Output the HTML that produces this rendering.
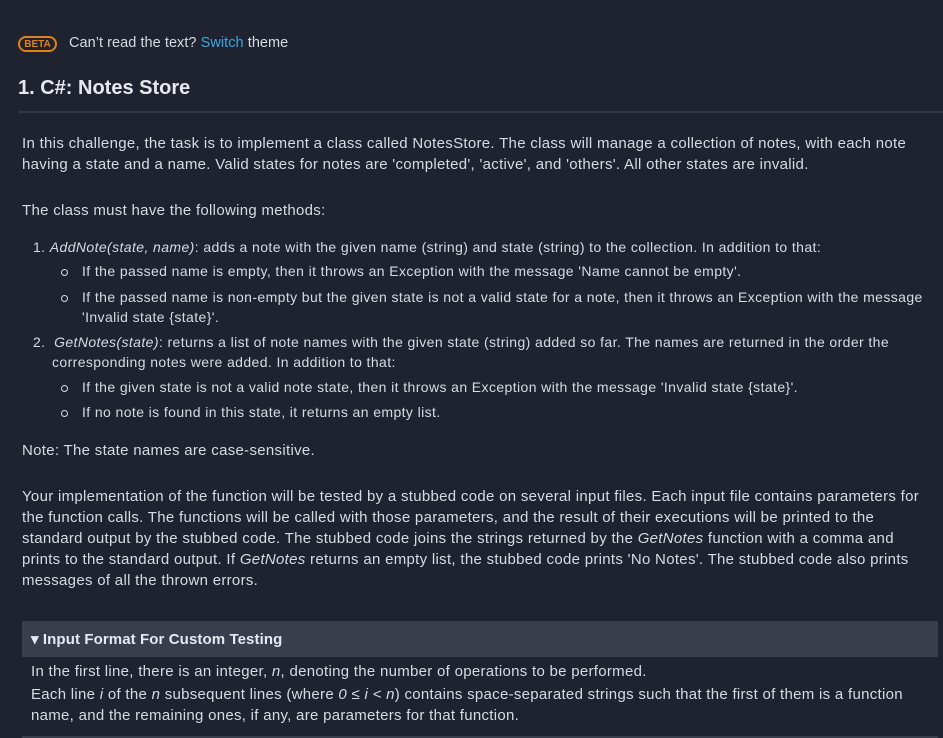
<!DOCTYPE html>
<html><head><meta charset="utf-8"><style>
body{margin:0;background:#1f2330;color:#d6dbe3;font-family:"Liberation Sans",sans-serif;width:943px;height:738px;overflow:hidden;position:relative}
.a{position:absolute;white-space:nowrap;font-size:15px;letter-spacing:0.3px}
.l{font-size:14px;letter-spacing:0.4px}
.b{font-size:15px;letter-spacing:0.29px}
.beta{position:absolute;left:18px;top:36px;width:39px;height:16px;border:2px solid #e0801a;border-radius:10px;box-sizing:border-box;color:#e0801a;font-size:10px;font-weight:bold;text-align:center;line-height:13px}
h1{position:absolute;left:18px;top:77px;margin:0;font-size:20px;font-weight:bold;color:#e6eaf0}
.hr{position:absolute;left:18px;right:0;top:111px;height:2px;background:#323745}
.dot{position:absolute;width:5px;height:5px;border:1.3px solid #d6dbe3;border-radius:50%}
.box{position:absolute;left:22px;width:916px;top:621px;height:36px;background:#393e4c}
</style></head><body>
<div class="beta">BETA</div>
<div class="a" style="left:69px;top:35px;font-size:14.5px;letter-spacing:0.05px">Can’t read the text? <span style="color:#3ea6e0">Switch</span> theme</div>
<h1>1. C#: Notes Store</h1>
<div class="hr"></div>
<div class="a" style="left:22px;top:135px">In this challenge, the task is to implement a class called NotesStore. The class will manage a collection of notes, with each note</div>
<div class="a" style="left:22px;top:156px">having a state and a name. Valid states for notes are 'completed', 'active', and 'others'. All other states are invalid.</div>
<div class="a" style="left:22px;top:202px">The class must have the following methods:</div>
<div class="a l" style="left:33px;top:239px">1. <i>AddNote(state, name)</i>: adds a note with the given name (string) and state (string) to the collection. In addition to that:</div>
<div class="dot" style="left:61px;top:269px"></div>
<div class="a l" style="left:82px;top:263px">If the passed name is empty, then it throws an Exception with the message 'Name cannot be empty'.</div>
<div class="dot" style="left:61px;top:295px"></div>
<div class="a l" style="left:82px;top:289px">If the passed name is non-empty but the given state is not a valid state for a note, then it throws an Exception with the message</div>
<div class="a l" style="left:82px;top:309px">'Invalid state {state}'.</div>
<div class="a l" style="left:33px;top:334px">2. &nbsp;<i>GetNotes(state)</i>: returns a list of note names with the given state (string) added so far. The names are returned in the order the</div>
<div class="a l" style="left:52px;top:354px">corresponding notes were added. In addition to that:</div>
<div class="dot" style="left:61px;top:385px"></div>
<div class="a l" style="left:82px;top:379px">If the given state is not a valid note state, then it throws an Exception with the message 'Invalid state {state}'.</div>
<div class="dot" style="left:61px;top:410px"></div>
<div class="a l" style="left:82px;top:404px">If no note is found in this state, it returns an empty list.</div>
<div class="a" style="left:22px;top:442px">Note: The state names are case-sensitive.</div>
<div class="a" style="left:22px;top:488px">Your implementation of the function will be tested by a stubbed code on several input files. Each input file contains parameters for</div>
<div class="a" style="left:22px;top:509px">the function calls. The functions will be called with those parameters, and the result of their executions will be printed to the</div>
<div class="a" style="left:22px;top:530px">standard output by the stubbed code. The stubbed code joins the strings returned by the <i>GetNotes</i> function with a comma and</div>
<div class="a" style="left:22px;top:551px">prints to the standard output. If <i>GetNotes</i> returns an empty list, the stubbed code prints 'No Notes'. The stubbed code also prints</div>
<div class="a" style="left:22px;top:572px">messages of all the thrown errors.</div>
<div class="box"></div>
<div class="a" style="left:31px;top:630px;font-weight:bold;color:#e6eaf0;font-size:15px;letter-spacing:0.1px">▾ Input Format For Custom Testing</div>
<div class="a b" style="left:31px;top:663px">In the first line, there is an integer, <i>n</i>, denoting the number of operations to be performed.</div>
<div class="a b" style="left:31px;top:686px">Each line <i>i</i> of the <i>n</i> subsequent lines (where <i>0 ≤ i &lt; n</i>) contains space-separated strings such that the first of them is a function</div>
<div class="a b" style="left:31px;top:707px">name, and the remaining ones, if any, are parameters for that function.</div>
<div style="position:absolute;left:22px;width:916px;top:736px;height:2px;background:#393e4c"></div>
</body></html>
